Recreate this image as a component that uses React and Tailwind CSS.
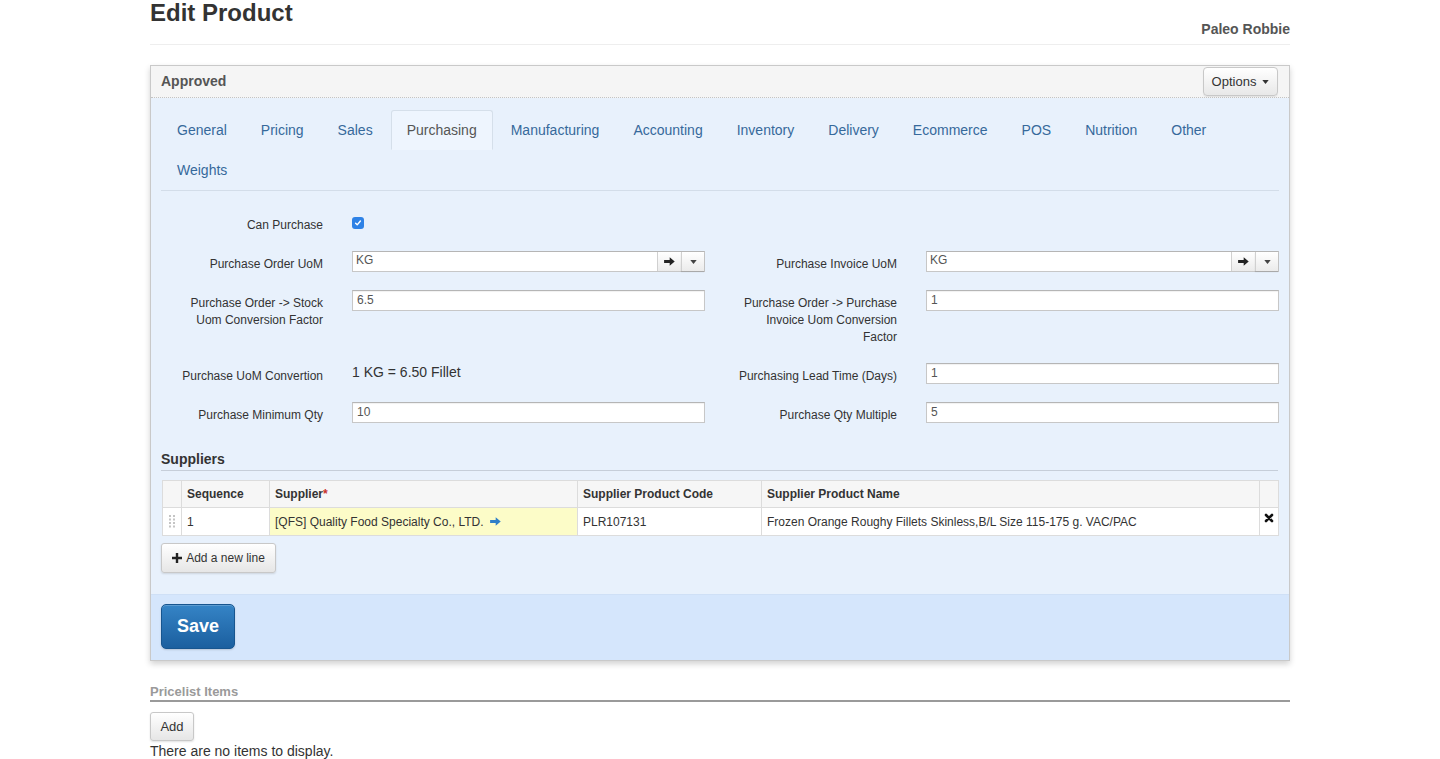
import React from "react";

const tabs = ["General", "Pricing", "Sales", "Purchasing", "Manufacturing", "Accounting", "Inventory", "Delivery", "Ecommerce", "POS", "Nutrition", "Other", "Weights"];

function ArrowIcon({ className = "" }) {
  return (
    <svg viewBox="0 0 12 10" className={className} fill="currentColor">
      <path d="M0 3.4h6.2V0.4L11.8 5 6.2 9.6V6.6H0z" />
    </svg>
  );
}

function Caret() {
  return (
    <svg viewBox="0 0 8 5" className="w-[7px] h-[4px]" fill="currentColor">
      <polygon points="0,0 8,0 4,5" />
    </svg>
  );
}

function TextInput({ value }) {
  return (
    <div className="h-[21px] w-[353px] bg-white border border-[#c7c7c7] border-t-[#b5b5b5] shadow-[inset_0_1px_1px_rgba(0,0,0,0.06)] pl-[4px] text-[12px] leading-[19px] text-[#555]">
      {value}
    </div>
  );
}

function ComboInput({ value }) {
  return (
    <div className="h-[21px] w-[353px] flex bg-white border border-[#c7c7c7] border-t-[#b5b5b5]">
      <div className="flex-1 pl-[3px] text-[12px] leading-[17px] text-[#555]">{value}</div>
      <div className="w-[24px] flex items-center justify-center border-l border-[#d0d0d0] bg-gradient-to-b from-white to-[#ebebeb] text-[#222]">
        <ArrowIcon className="w-[11px] h-[9px]" />
      </div>
      <div className="w-[23px] flex items-center justify-center border-l border-[#d0d0d0] bg-gradient-to-b from-white to-[#ebebeb] text-[#444] shadow-[0_1px_1px_rgba(0,0,0,0.15)]">
        <Caret />
      </div>
    </div>
  );
}

function Field({ label, labelWidth, children }) {
  return (
    <div className="flex items-start">
      <div style={{ width: labelWidth }} className="shrink-0 text-right pt-[5px] text-[12px] leading-[17px] text-[#333]">
        {label}
      </div>
      <div className="ml-[29px]">{children}</div>
    </div>
  );
}

export default function App() {
  const L = 162;
  const R = 177;
  return (
    <div className="min-h-screen bg-white text-[#333]" style={{ fontFamily: '"Liberation Sans", Arial, sans-serif' }}>
      <div className="w-[1140px] mx-auto">
        <div className="flex justify-between items-end h-[45px] pb-[6px] border-b border-[#eee]">
          <h1 className="self-start text-[24px] leading-[26px] font-bold text-[#333]">Edit Product</h1>
          <div className="text-[14px] leading-[17px] font-bold text-[#555]">Paleo Robbie</div>
        </div>

        <div className="mt-[20px] border border-[#c9c9c9] shadow-[0_3px_6px_rgba(0,0,0,0.18)]">
          <div className="h-[32px] flex items-center justify-between pl-[10px] pr-[11px] bg-[#f5f5f5] border-b border-dotted border-[#c4c4c4]">
            <div className="text-[14px] font-bold text-[#555]">Approved</div>
            <div className="h-[29px] w-[75px] flex items-center justify-center gap-[6px] rounded-[4px] border border-[#c8c8c8] bg-gradient-to-b from-white to-[#e8e8e8] text-[13px] text-[#333] shadow-[0_1px_1px_rgba(0,0,0,0.08)]">
              Options <Caret />
            </div>
          </div>

          <div className="bg-[#e8f1fc] pt-[12px] px-[10px] pb-[21px]">
            <div className="flex flex-wrap border-b border-[#d3dde9]">
              {tabs.map((t) => (
                <div
                  key={t}
                  className={
                    t === "Purchasing"
                      ? "h-[40px] px-[15px] mr-[2px] -mb-px flex items-center text-[14px] text-[#555] bg-[#eef5fe] border border-[#d5dfea] border-b-[#eef5fe] rounded-t-[3px]"
                      : "h-[40px] px-[15px] mr-[2px] flex items-center text-[14px] text-[#36699b] border border-transparent"
                  }
                >
                  {t}
                </div>
              ))}
            </div>

            <div className="mt-[21px] grid grid-cols-[559px_559px] gap-y-[17px]">
              <Field label="Can Purchase" labelWidth={L}>
                <div className="mt-[5px] w-[12px] h-[12px] rounded-[3px] bg-[#2e82e6] flex items-center justify-center">
                  <svg viewBox="0 0 10 10" className="w-[8px] h-[8px]" fill="none" stroke="white" strokeWidth="1.8" strokeLinecap="round" strokeLinejoin="round">
                    <path d="M2 5.3l2 2 4-4.8" />
                  </svg>
                </div>
              </Field>
              <div />

              <Field label="Purchase Order UoM" labelWidth={L}>
                <ComboInput value="KG" />
              </Field>
              <Field label="Purchase Invoice UoM" labelWidth={R}>
                <ComboInput value="KG" />
              </Field>

              <Field label={<>Purchase Order -&gt; Stock<br />Uom Conversion Factor</>} labelWidth={L}>
                <TextInput value="6.5" />
              </Field>
              <Field label={<>Purchase Order -&gt; Purchase<br />Invoice Uom Conversion<br />Factor</>} labelWidth={R}>
                <TextInput value="1" />
              </Field>

              <Field label="Purchase UoM Convertion" labelWidth={L}>
                <div className="text-[14px] leading-[18px] text-[#333]">1 KG = 6.50 Fillet</div>
              </Field>
              <Field label="Purchasing Lead Time (Days)" labelWidth={R}>
                <TextInput value="1" />
              </Field>

              <Field label="Purchase Minimum Qty" labelWidth={L}>
                <TextInput value="10" />
              </Field>
              <Field label="Purchase Qty Multiple" labelWidth={R}>
                <TextInput value="5" />
              </Field>
            </div>

            <div className="mt-[27px] pb-[2px] border-b border-[#c6ced9] text-[14px] leading-[17px] font-bold text-[#333] w-[1117px]">
              Suppliers
            </div>

            <table className="mt-[9px] ml-[1px] border-collapse text-[12px] text-[#333] table-fixed w-[1116px]">
              <colgroup>
                <col className="w-[19px]" />
                <col className="w-[88px]" />
                <col className="w-[308px]" />
                <col className="w-[184px]" />
                <col className="w-[498px]" />
                <col className="w-[19px]" />
              </colgroup>
              <thead>
                <tr className="h-[27px] bg-[#f6f6f6]">
                  <th className="border border-[#dcdcdc]" />
                  <th className="border border-[#dcdcdc] text-left font-bold px-[5px]">Sequence</th>
                  <th className="border border-[#dcdcdc] text-left font-bold px-[5px]">
                    Supplier<span className="text-[#c9302c]">*</span>
                  </th>
                  <th className="border border-[#dcdcdc] text-left font-bold px-[5px]">Supplier Product Code</th>
                  <th className="border border-[#dcdcdc] text-left font-bold px-[5px]">Supplier Product Name</th>
                  <th className="border border-[#dcdcdc]" />
                </tr>
              </thead>
              <tbody>
                <tr className="h-[28px] bg-white">
                  <td className="border border-[#dcdcdc]">
                    <svg viewBox="0 0 7 13" className="w-[7px] h-[13px] mx-auto" fill="#c4c4c4">
                      <rect x="0" y="0" width="2" height="2" />
                      <rect x="4" y="0" width="2" height="2" />
                      <rect x="0" y="3.5" width="2" height="2" />
                      <rect x="4" y="3.5" width="2" height="2" />
                      <rect x="0" y="7" width="2" height="2" />
                      <rect x="4" y="7" width="2" height="2" />
                      <rect x="0" y="10.5" width="2" height="2" />
                      <rect x="4" y="10.5" width="2" height="2" />
                    </svg>
                  </td>
                  <td className="border border-[#dcdcdc] px-[5px]">1</td>
                  <td className="border border-[#dcdcdc] px-[5px] bg-[#fcfcc8]">
                    <span className="inline-flex items-center gap-[6px]">
                      [QFS] Quality Food Specialty Co., LTD.
                      <ArrowIcon className="w-[11px] h-[9px] text-[#2f7fc8]" />
                    </span>
                  </td>
                  <td className="border border-[#dcdcdc] px-[5px]">PLR107131</td>
                  <td className="border border-[#dcdcdc] px-[5px]">Frozen Orange Roughy Fillets Skinless,B/L Size 115-175 g. VAC/PAC</td>
                  <td className="border border-[#dcdcdc] align-top pt-[5px]">
                    <svg viewBox="0 0 10 10" className="w-[10px] h-[10px] mx-auto" stroke="#111" strokeWidth="2.6" strokeLinecap="round">
                      <path d="M2 2l6 6M8 2l-6 6" />
                    </svg>
                  </td>
                </tr>
              </tbody>
            </table>

            <div className="mt-[7px] h-[30px] w-[115px] flex items-center justify-center gap-[4px] rounded-[3px] border border-[#c8c8c8] bg-gradient-to-b from-white to-[#e6e6e6] text-[12px] text-[#333] shadow-[0_1px_2px_rgba(0,0,0,0.12)]">
              <svg viewBox="0 0 10 10" className="w-[10px] h-[10px]" fill="#222">
                <path d="M3.8 0h2.4v3.8H10v2.4H6.2V10H3.8V6.2H0V3.8h3.8z" />
              </svg>
              Add a new line
            </div>
          </div>

          <div className="bg-[#d5e6fc] border-t border-[#cfe0f6] pt-[9px] pb-[11px] px-[10px]">
            <div className="h-[45px] w-[74px] flex items-center justify-center rounded-[5px] border border-[#17558f] bg-gradient-to-b from-[#3584c6] to-[#1b5f9f] text-white text-[18px] font-bold shadow-[inset_0_1px_0_rgba(255,255,255,0.2),0_1px_2px_rgba(0,0,0,0.15)]">
              Save
            </div>
          </div>
        </div>

        <div className="mt-[23px] border-b-2 border-[#9a9a9a] text-[13px] leading-[16px] font-bold text-[#9a9a9a]">
          Pricelist Items
        </div>
        <div className="mt-[10px] h-[29px] w-[44px] flex items-center justify-center rounded-[3px] border border-[#c8c8c8] bg-gradient-to-b from-white to-[#e6e6e6] text-[13px] text-[#333] shadow-[0_1px_2px_rgba(0,0,0,0.12)]">
          Add
        </div>
        <div className="mt-[1px] text-[14px] leading-[18px] text-[#333]">There are no items to display.</div>
      </div>
    </div>
  );
}
